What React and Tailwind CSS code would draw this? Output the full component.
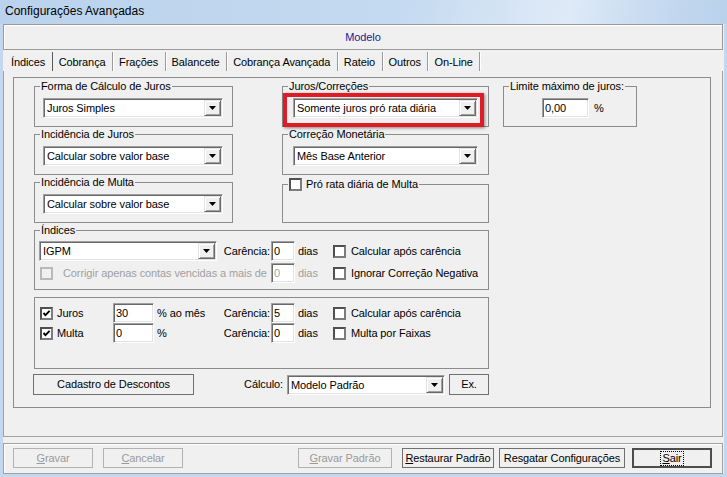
import React from "react";

const sunken =
  "border border-t-[#a0a0a0] border-l-[#a0a0a0] border-b-white border-r-white shadow-[inset_1px_1px_0_#696969,inset_-1px_-1px_0_#e3e3e3]";

function Combo({ value, className = "" }) {
  return (
    <div className={`flex h-[20px] bg-white ${sunken} ${className}`}>
      <span className="flex-1 pl-[3px] leading-[18px] whitespace-nowrap overflow-hidden">{value}</span>
      <span className="my-[1px] mr-[1px] w-[17px] flex items-center justify-center bg-[#f0f0f0] border border-t-[#e3e3e3] border-l-[#e3e3e3] border-b-[#696969] border-r-[#696969] shadow-[inset_1px_1px_0_#fff,inset_-1px_-1px_0_#a0a0a0]">
        <svg width="7" height="4" viewBox="0 0 7 4">
          <path d="M0 0H7L3.5 4Z" fill="#000" />
        </svg>
      </span>
    </div>
  );
}

function Edit({ value, className = "", disabled }) {
  return (
    <div className={`h-[20px] bg-white pl-[2px] leading-[18px] ${sunken} ${disabled ? "text-[#a0a0a0]" : ""} ${className}`}>
      {value}
    </div>
  );
}

function Check({ checked, disabled }) {
  return (
    <span
      className={`w-[13px] h-[13px] shrink-0 flex items-center justify-center border-2 ${
        disabled
          ? "border-[#b9b9b9] bg-[#f0f0f0]"
          : "border-t-[#505050] border-l-[#505050] border-b-[#7c7c7c] border-r-[#7c7c7c] bg-white"
      }`}
    >
      {checked && (
        <svg width="9" height="9" viewBox="0 0 9 9">
          <path d="M1.5 4L3.5 6.2L7.6 1.8" stroke="#000" strokeWidth="1.9" fill="none" />
        </svg>
      )}
    </span>
  );
}

function Btn({ children, className = "", disabled, def }) {
  const look = def
    ? "border-2 border-[#4d4d4d]"
    : disabled
    ? "border border-[#b2b2b2] text-[#9a9a9a]"
    : "border border-[#707070]";
  return (
    <div className={`flex items-center justify-center bg-[#f0f0f0] whitespace-nowrap ${look} ${className}`}>
      {children}
    </div>
  );
}

function Group({ label, className = "", children }) {
  return (
    <fieldset className={`border border-[#8c8c8c] ${className}`}>
      <legend className="ml-[5px] px-[1px] leading-[13px]">{label}</legend>
      {children}
    </fieldset>
  );
}

function CarenciaRow({ left, value, disabled, check }) {
  return (
    <div className="flex items-center h-[20px]">
      <div className="w-[236px] h-full flex items-center overflow-hidden whitespace-nowrap">
        {left}
        {!disabled && <span className="ml-auto pr-[1px]">Carência:</span>}
      </div>
      <Edit className="w-[24px]" value={value} disabled={disabled} />
      <span className={`w-[38px] pl-[3px] ${disabled ? "text-[#a0a0a0]" : ""}`}>dias</span>
      <Check />
      <span className="ml-[5px] whitespace-nowrap">{check}</span>
    </div>
  );
}

const tabs = ["Índices", "Cobrança", "Frações", "Balancete", "Cobrança Avançada", "Rateio", "Outros", "On-Line"];

export default function App() {
  return (
    <div className="w-[727px] h-[477px] bg-[#c3d8ef] flex flex-col overflow-hidden text-[11px] tracking-[-0.1px] text-black font-['Tahoma','Liberation_Sans',Arial,sans-serif]">
      {/* title */}
      <div className="h-[24px] shrink-0 pl-[5px] pt-[2px] text-[12px] tracking-normal font-['Segoe_UI','Liberation_Sans',sans-serif] bg-[linear-gradient(100deg,#bad2ec_0%,#c4daf0_55%,#dfeaf7_78%,#c9dcf1_88%,#b9d1eb_100%)]">
        Configurações Avançadas
      </div>

      <div className="ml-[3px] w-[721px] h-[450px] bg-[#f0f0f0] flex flex-col">
        {/* modelo */}
        <div className="h-[26px] w-[720px] flex items-center justify-center border border-[#9a9a9a] shadow-[inset_1px_1px_0_#fff] text-[#1a1a96]">
          Modelo
        </div>

        {/* tabs */}
        <div className="h-[21px] flex pl-[2px] pt-[2px]">
          {tabs.map((t, i) => (
            <div
              key={t}
              className={`pl-[6px] pr-[6.5px] h-full flex items-center pt-[1px] whitespace-nowrap border-r ${
                i === 0 ? "border-[#5a5a5a]" : "border-[#9a9a9a] shadow-[1px_0_0_#fff]"
              }`}
            >
              {t}
            </div>
          ))}
        </div>

        {/* tab panel */}
        <div className="h-[366px] w-[720px] border-l border-r border-b border-[#a0a0a0] pt-[6px]">
          <div className="ml-[9px] w-[698px] h-[331px] border border-[#8c8c8c] pl-[20px] pt-[2px]">
            {/* top section */}
            <div className="flex">
              <div className="w-[199px] flex flex-col gap-[1px]">
                <Group label="Forma de Cálculo de Juros" className="h-[47px]">
                  <Combo value="Juros Simples" className="ml-[8px] mt-[5px] w-[180px]" />
                </Group>
                <Group label="Incidência de Juros" className="h-[47px]">
                  <Combo value="Calcular sobre valor base" className="ml-[8px] mt-[5px] w-[180px]" />
                </Group>
                <Group label="Incidência de Multa" className="h-[47px]">
                  <Combo value="Calcular sobre valor base" className="ml-[8px] mt-[5px] w-[180px]" />
                </Group>
              </div>

              <div className="relative ml-[49px] w-[207px] flex flex-col gap-[1px]">
                <Group label="Juros/Correções" className="h-[47px]">
                  <Combo value="Somente juros pró rata diária" className="ml-[10px] mt-[5px] w-[185px]" />
                </Group>
                <Group label="Correção Monetária" className="h-[47px]">
                  <Combo value="Mês Base Anterior" className="ml-[10px] mt-[5px] w-[185px]" />
                </Group>
                <fieldset className="mt-[2px] h-[45px] border border-[#8c8c8c]">
                  <legend className="ml-[5px] px-[1px] flex items-center gap-[4px] leading-[13px]">
                    <Check />
                    <span>Pró rata diária de Multa</span>
                  </legend>
                </fieldset>
                <div className="absolute left-[1px] top-[13px] w-[201px] h-[34px] border-[4px] border-[#df1c24] shadow-[1px_1px_3px_rgba(0,0,0,0.45)]" />
              </div>

              <div className="ml-[14px] w-[134px]">
                <Group label="Limite máximo de juros:" className="h-[47px]">
                  <div className="flex items-center mt-[5px] ml-[38px]">
                    <Edit className="w-[47px]" value="0,00" />
                    <span className="ml-[5px]">%</span>
                  </div>
                </Group>
              </div>
            </div>

            {/* indices */}
            <Group label="Índices" className="mt-[1px] w-[455px] pt-[4px] pb-[6px]">
              <CarenciaRow
                left={<Combo value="IGPM" className="ml-[4px] w-[178px]" />}
                value="0"
                check="Calcular após carência"
              />
              <div className="mt-[2px]">
                <CarenciaRow
                  disabled
                  left={
                    <>
                      <span className="ml-[5px]">
                        <Check disabled />
                      </span>
                      <span className="ml-[10px] text-[#a0a0a0]">Corrigir apenas contas vencidas a mais de</span>
                    </>
                  }
                  value="0"
                  check="Ignorar Correção Negativa"
                />
              </div>
            </Group>

            {/* juros / multa */}
            <div className="mt-[7px] w-[455px] h-[72px] border border-[#8c8c8c] pt-[5px]">
              <CarenciaRow
                left={
                  <>
                    <span className="ml-[5px]">
                      <Check checked />
                    </span>
                    <span className="ml-[4px] w-[56px]">Juros</span>
                    <Edit className="w-[41px]" value="30" />
                    <span className="ml-[3px]">% ao mês</span>
                  </>
                }
                value="5"
                check="Calcular após carência"
              />
              <CarenciaRow
                left={
                  <>
                    <span className="ml-[5px]">
                      <Check checked />
                    </span>
                    <span className="ml-[4px] w-[56px]">Multa</span>
                    <Edit className="w-[41px]" value="0" />
                    <span className="ml-[3px]">%</span>
                  </>
                }
                value="0"
                check="Multa por Faixas"
              />
            </div>

            {/* bottom row */}
            <div className="mt-[5px] flex items-center h-[21px]">
              <Btn className="-ml-[1px] w-[161px] h-[21px]">Cadastro de Descontos</Btn>
              <span className="w-[93px] text-right pr-[4px]">Cálculo:</span>
              <Combo value="Modelo Padrão" className="w-[158px]" />
              <Btn className="ml-[4px] w-[40px] h-[21px]">Ex.</Btn>
            </div>
          </div>
        </div>

        {/* buttons */}
        <div className="mt-[6px] h-[31px] w-[720px] border border-[#a0a0a0] shadow-[inset_1px_1px_0_#fff] pt-[4px] pl-[9px] flex items-start">
          <Btn disabled className="w-[80px] h-[20px]">
            <span><u>G</u>ravar</span>
          </Btn>
          <Btn disabled className="ml-[10px] w-[80px] h-[20px]">
            <span><u>C</u>ancelar</span>
          </Btn>
          <Btn disabled className="ml-[115px] w-[94px] h-[20px]">
            <span><u>G</u>ravar Padrão</span>
          </Btn>
          <Btn className="ml-[10px] w-[92px] h-[20px]">
            <span><u>R</u>estaurar Padrão</span>
          </Btn>
          <Btn className="ml-[5px] w-[126px] h-[20px]">Resgatar Configurações</Btn>
          <Btn def className="ml-[7px] w-[80px] h-[20px]">
            <span className="border border-dotted border-black px-[1px] leading-[13px]"><u>S</u>air</span>
          </Btn>
        </div>
      </div>
    </div>
  );
}
